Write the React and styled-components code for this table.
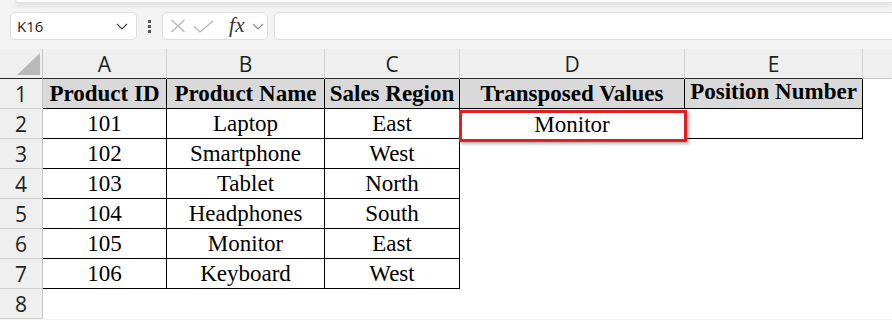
import React from "react";
import styled, { createGlobalStyle } from "styled-components";

const GlobalStyle = createGlobalStyle`
  html, body {
    margin: 0;
    padding: 0;
    background: #f3f3f3;
    overflow: hidden;
  }
`;

const serif = `"Liberation Serif", "Times New Roman", Tinos, "DejaVu Serif", serif`;

const headers = [
  "Product ID",
  "Product Name",
  "Sales Region",
  "Transposed Values",
  "Position Number",
];

const rows = [
  ["101", "Laptop", "East"],
  ["102", "Smartphone", "West"],
  ["103", "Tablet", "North"],
  ["104", "Headphones", "South"],
  ["105", "Monitor", "East"],
  ["106", "Keyboard", "West"],
];

const App = () => {
  return (
    <Page>
      <GlobalStyle />
      <Ribbon />
      <FormulaBar>
        <NameBox>
          <span>K16</span>
          <Chevron color="#444" />
        </NameBox>
        <Dots>
          <i />
          <i />
          <i />
        </Dots>
        <FxBox>
          <svg width="16" height="14" viewBox="0 0 16 14">
            <path d="M1.5 1 L14.5 13 M14.5 1 L1.5 13" stroke="#b4b4b4" strokeWidth="1.3" fill="none" />
          </svg>
          <svg width="21" height="13" viewBox="0 0 21 13">
            <path d="M1 6.5 L7 12 L20 1" stroke="#b4b4b4" strokeWidth="1.3" fill="none" />
          </svg>
          <Fx>fx</Fx>
          <Chevron color="#8a8a8a" />
        </FxBox>
        <Input />
      </FormulaBar>

      <Sheet>
        <Corner>
          <Triangle />
        </Corner>
        {["A", "B", "C", "D", "E"].map((l) => (
          <ColHead key={l} dark>
            {l}
          </ColHead>
        ))}
        <ColHead last />

        <RowHead>1</RowHead>
        {headers.map((h, i) => (
          <Cell key={h} head boxed lift={i === 4}>
            {h}
          </Cell>
        ))}
        <Cell />

        {rows.map((r, i) => (
          <React.Fragment key={r[0]}>
            <RowHead>{i + 2}</RowHead>
            {r.map((v, j) => (
              <Cell key={j} boxed>
                {v}
              </Cell>
            ))}
            {i === 0 ? (
              <>
                <Cell selected>
                  Monitor
                  <Highlight />
                </Cell>
                <Cell boxed />
              </>
            ) : (
              <>
                <Cell />
                <Cell />
              </>
            )}
            <Cell />
          </React.Fragment>
        ))}

        <RowHead>8</RowHead>
        <Cell />
        <Cell />
        <Cell />
        <Cell />
        <Cell />
        <Cell />
      </Sheet>
    </Page>
  );
};

const Chevron = ({ color }) => (
  <svg width="12" height="7" viewBox="0 0 12 7">
    <path d="M1 1 L6 6 L11 1" stroke={color} strokeWidth="1.2" fill="none" />
  </svg>
);

export default App;

const Page = styled.div`
  width: 892px;
  height: 320px;
  overflow: hidden;
  background: #f3f3f3;
`;

const Ribbon = styled.div`
  height: 2px;
  margin-left: 15px;
  background: #fff;
  border: 1px solid #e2e2e2;
  border-top: none;
  border-right: none;
  border-bottom-left-radius: 6px;
  box-shadow: 0 2px 4px rgba(0, 0, 0, 0.12);
`;

const FormulaBar = styled.div`
  display: flex;
  align-items: center;
  height: 28px;
  margin-top: 9px;
  padding-left: 10px;
  margin-right: -10px;
`;

const Box = styled.div`
  box-sizing: border-box;
  height: 28px;
  background: #fff;
  border: 1px solid #dedede;
  border-radius: 5px;
  display: flex;
  align-items: center;
`;

const NameBox = styled(Box)`
  width: 127px;
  padding: 0 8px 0 6px;
  justify-content: space-between;
  font-family: "Open Sans", "Noto Sans", sans-serif;
  font-size: 15px;
  color: #222;
`;

const Dots = styled.div`
  width: 25px;
  display: flex;
  flex-direction: column;
  align-items: center;
  gap: 2px;

  i {
    width: 3px;
    height: 3px;
    background: #555;
  }
`;

const FxBox = styled(Box)`
  width: 106px;
  padding: 0 3px 0 7px;
  justify-content: space-between;
`;

const Fx = styled.span`
  font-family: ${serif};
  font-style: italic;
  font-size: 21px;
  color: #333;
  margin: 0 0 2px 8px;
  letter-spacing: 0.5px;
`;

const Input = styled(Box)`
  flex: 1;
  margin-left: 6px;
`;

const Sheet = styled.div`
  display: grid;
  grid-template-columns: 43px 124px 158px 135px 225px 178px 1fr;
  grid-auto-rows: 30px;
  margin-top: 9px;
  background: #fff;
`;

const Corner = styled.div`
  box-sizing: border-box;
  background: #efefef;
  border-right: 1px solid #c8c8c8;
  border-bottom: 1px solid #222;
  display: flex;
  align-items: flex-end;
  justify-content: flex-end;
  padding: 0 2px 3px 0;
`;

const Triangle = styled.div`
  width: 23px;
  height: 22px;
  background: #b9b9b9;
  clip-path: polygon(100% 0, 100% 100%, 0 100%);
`;

const ColHead = styled.div`
  box-sizing: border-box;
  background: #efefef;
  border-right: 1px solid ${(p) => (p.last ? "transparent" : "#d2d2d2")};
  border-bottom: 1px solid ${(p) => (p.dark ? "#2a2a2a" : "#c8c8c8")};
  display: flex;
  align-items: center;
  justify-content: center;
  font-family: "Open Sans", "Noto Sans", sans-serif;
  font-size: 21px;
  color: #1f1f1f;
`;

const RowHead = styled.div`
  box-sizing: border-box;
  background: #efefef;
  border-right: 1px solid #c4c4c4;
  border-bottom: 1px solid #cfcfcf;
  display: flex;
  align-items: center;
  justify-content: center;
  font-family: "Open Sans", "Noto Sans", sans-serif;
  font-size: 21px;
  color: #1f1f1f;
`;

const Cell = styled.div`
  box-sizing: border-box;
  position: ${(p) => (p.selected ? "relative" : "static")};
  background: ${(p) => (p.head ? "#d9d9d9" : "#fff")};
  border-right: 1px solid ${(p) => (p.boxed ? "#000" : "transparent")};
  border-bottom: 1px solid ${(p) => (p.boxed ? "#000" : "transparent")};
  display: flex;
  align-items: center;
  justify-content: center;
  padding: ${(p) => (p.lift ? "0 0 4px" : p.selected ? "3px 0 0" : "1px 0 0")};
  font-family: ${serif};
  font-size: 23px;
  font-weight: ${(p) => (p.head ? 700 : 400)};
  color: #000;
  white-space: nowrap;
`;

const Highlight = styled.div`
  position: absolute;
  z-index: 2;
  box-sizing: border-box;
  left: -1px;
  top: 1px;
  width: 228px;
  height: 32px;
  border: 3px solid #e21d23;
  box-shadow: 2px 2px 3px rgba(0, 0, 0, 0.3);
  pointer-events: none;
`;
